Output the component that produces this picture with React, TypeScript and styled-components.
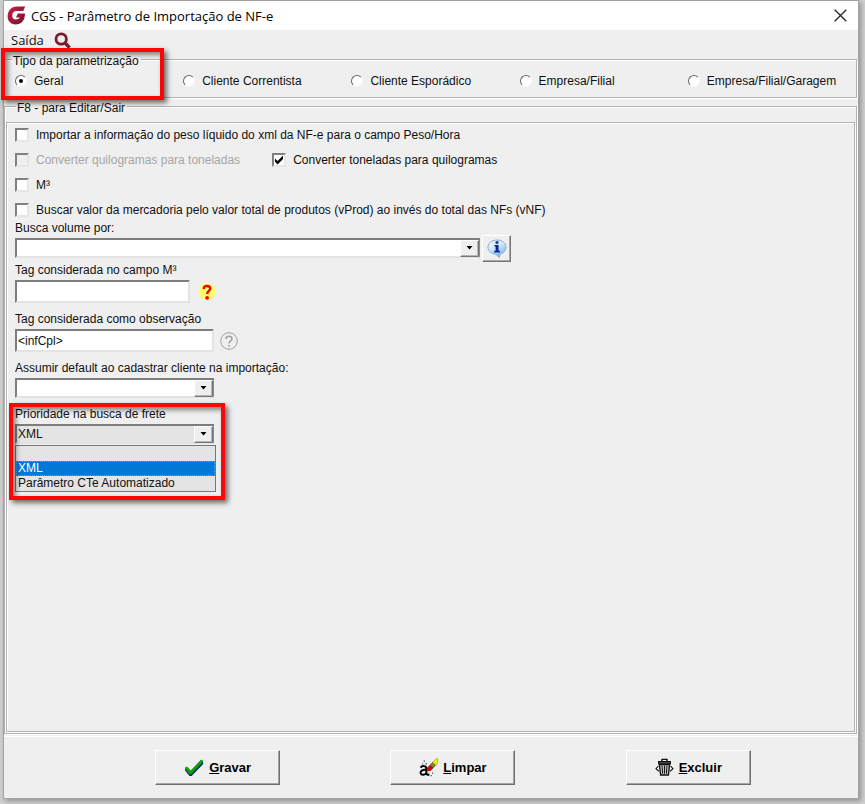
import React, { useState } from "react";
import styled, { createGlobalStyle, css } from "styled-components";

const GlobalStyle = createGlobalStyle`
  * { box-sizing: border-box; }
  body {
    margin: 0;
    background: #cfcfcf;
    color: #111;
    font: 12px/14px "Liberation Sans", Arial, sans-serif;
  }
  button, input, select { font: inherit; color: inherit; }
`;

const Desktop = styled.div`
  min-height: 100vh;
  display: flex;
  padding: 0 6px 5px 3px;
`;

const Window = styled.main`
  flex: 1;
  min-width: 0;
  display: flex;
  flex-direction: column;
  background: #efefef;
  border: 1px solid #a3a3a3;
  box-shadow: 2px 2px 5px rgba(0, 0, 0, 0.3);
`;

const TitleBar = styled.header`
  display: flex;
  align-items: center;
  gap: 5px;
  height: 29px;
  padding: 0 11px 0 3px;
  background: #fff;
`;

const Title = styled.h1`
  flex: 1;
  margin: 0;
  font: 400 13px/20px "Open Sans", "Segoe UI", sans-serif;
  color: #000;
`;

const IconButton = styled.button`
  display: flex;
  padding: 0;
  border: 0;
  background: none;
`;

const MenuBar = styled.nav`
  display: flex;
  align-items: center;
  gap: 10px;
  height: 20px;
  padding: 0 7px;
`;

const MenuItem = styled.button`
  padding: 0;
  border: 0;
  background: none;
  font: 400 13px/18px "Open Sans", "Segoe UI", sans-serif;
`;

const etched = css`
  border: 1px solid #b2b2b2;
  box-shadow: 1px 1px 0 #fff, inset 1px 1px 0 #fff;
`;

const Group = styled.fieldset<{ $fill?: boolean }>`
  position: relative;
  margin: 1px 1px 0 0;
  padding: 0;
  min-width: 0;
  ${etched}
  ${(p) => p.$fill && css`
    flex: 1;
    display: flex;
    flex-direction: column;
    margin-top: 0;
    padding: 7px 1px 1px;
  `}
`;

const Legend = styled.legend<{ $indent: number }>`
  margin-left: ${(p) => p.$indent}px;
  padding: 3px 2px 0 1px;
  background: #efefef;
`;

const RadioRow = styled.div`
  display: grid;
  grid-template-columns: repeat(5, 1fr);
  padding: 6px 0 9px 10px;
`;

const Choice = styled.label<{ $disabled?: boolean }>`
  display: flex;
  align-items: center;
  gap: 7px;
  white-space: nowrap;
  color: ${(p) => (p.$disabled ? "#a6a6a6" : "inherit")};
`;

const Radio = styled.input`
  appearance: none;
  display: grid;
  place-items: center;
  width: 12px;
  height: 12px;
  margin: 0;
  border: 1px solid;
  border-color: #666 #f8f8f8 #f8f8f8 #666;
  border-radius: 50%;
  background: #fff;
  &:checked::before {
    content: "";
    width: 4px;
    height: 4px;
    border-radius: 50%;
    background: #000;
  }
`;

const Box = styled.span`
  display: grid;
  width: 14px;
  height: 14px;
  > * { grid-area: 1 / 1; }
  > svg { display: none; pointer-events: none; }
  > input:checked + svg { display: block; }
`;

const Check = styled.input`
  appearance: none;
  width: 14px;
  height: 14px;
  margin: 0;
  border: 2px solid;
  border-color: #808080 #e6e6e6 #e6e6e6 #808080;
  background: #fff;
  &:disabled { background: #efefef; }
`;

const Panel = styled.div`
  flex: 1;
  padding: 0 8px 24px;
  ${etched}
`;

const Checks = styled.div`
  display: flex;
  flex-direction: column;
  gap: 3px;
  padding-top: 1px;
`;

const CheckRow = styled.div`
  display: flex;
  align-items: center;
  gap: 32px;
  height: 22px;
`;

const Field = styled.div<{ $gap?: number }>`
  display: flex;
  flex-direction: column;
  align-items: flex-start;
  gap: 3px;
  margin-bottom: ${(p) => p.$gap ?? 9}px;
`;

const Control = styled.div<{ $height: number; $gap?: number }>`
  display: flex;
  align-items: center;
  gap: ${(p) => p.$gap ?? 2}px;
  height: ${(p) => p.$height}px;
`;

const sunken = css`
  border: 2px solid;
  border-color: #7d7d7d #e3e3e3 #e3e3e3 #7d7d7d;
  border-radius: 0;
  background: #fff;
  outline: 0;
`;

const TextBox = styled.input<{ $width: number }>`
  ${sunken}
  width: ${(p) => p.$width}px;
  height: 23px;
  padding: 0 1px;
`;

const Combo = styled.div<{ $width: number }>`
  position: relative;
  display: grid;
  width: ${(p) => p.$width}px;
  height: 20px;
`;

const Select = styled.select<{ $shaded?: boolean }>`
  ${sunken}
  border-color: #7d7d7d #8a8a8a #e3e3e3 #7d7d7d;
  border-right-width: 1px;
  appearance: none;
  grid-area: 1 / 1;
  width: 100%;
  height: 20px;
  padding: 0 20px 0 1px;
  ${(p) => p.$shaded && css`background: #e4e4e4;`}
`;

const raised = css`
  border: 1px solid;
  border-color: #fff #777 #777 #fff;
  background: #efefef;
`;

const DropArrow = styled.span`
  ${raised}
  grid-area: 1 / 1;
  justify-self: end;
  align-self: center;
  display: grid;
  place-items: center;
  width: 19px;
  height: 17px;
  margin-right: 1px;
  box-shadow: inset -1px -1px 0 #b5b5b5;
  pointer-events: none;
`;

const OptionList = styled.ul`
  position: absolute;
  top: 21px;
  left: 0;
  right: -2px;
  margin: 0;
  padding: 0;
  list-style: none;
  border: 1px solid #777;
  background: #e4e4e4;
`;

const Option = styled.li<{ $active?: boolean }>`
  height: 15px;
  padding: 0 2px;
  line-height: 15px;
  border: 0;
  ${(p) => p.$active && css`
    padding: 0 1px;
    border: 1px dotted #d9822b;
    line-height: 13px;
    background: #0078d7;
    color: #fff;
  `}
`;

const InfoButton = styled.button`
  ${raised}
  display: grid;
  place-items: center;
  flex: none;
  width: 29px;
  height: 27px;
  padding: 0;
  box-shadow: inset -1px -1px 0 #a8a8a8;
`;

const Footer = styled.footer`
  display: grid;
  grid-template-columns: repeat(3, 1fr);
  justify-items: center;
  margin-top: 2px;
  padding: 13px 52px 13px 96px;
  border-top: 1px solid #fff;
`;

const ActionButton = styled.button`
  display: flex;
  align-items: center;
  justify-content: center;
  gap: 5px;
  width: 125px;
  height: 35px;
  padding: 0;
  border: 1px solid;
  border-color: #fff #6f6f6f #6f6f6f #fff;
  background: #efefef;
  box-shadow: inset -1px -1px 0 #a5a5a5;
  font-weight: 700;
  font-size: 13px;
  color: #000;
`;

const Highlight = styled.div<{ $x: number; $y: number; $w: number; $h: number }>`
  position: absolute;
  left: ${(p) => p.$x}px;
  top: ${(p) => p.$y}px;
  width: ${(p) => p.$w}px;
  height: ${(p) => p.$h}px;
  border: 4px solid #f80808;
  box-shadow: 3px 3px 5px rgba(0, 0, 0, 0.55), inset 3px 3px 5px rgba(0, 0, 0, 0.45);
  pointer-events: none;
  z-index: 2;
`;

const FreightField = styled(Field)`
  position: relative;
  width: 199px;
`;

const LogoIcon = () => (
  <svg width="19" height="19" viewBox="0 0 19 19" aria-hidden="true">
    <defs>
      <linearGradient id="logo" x1="0" y1="0" x2="1" y2="1">
        <stop offset="0" stopColor="#d3203c" />
        <stop offset="1" stopColor="#6d1238" />
      </linearGradient>
    </defs>
    <path
      fill="url(#logo)"
      d="M18.2 0.6 L16.2 5 H9.6 C7 5 5.4 6.8 5.2 9.4 C5.1 11.8 6.6 13.4 8.8 13.4 C10.8 13.4 12.2 12.7 12.8 11.4 H9 L10.8 7.4 H18 L17.6 11 C16.8 15.6 13.4 18.4 8.6 18.4 C3.6 18.4 0.4 15 0.6 10 C0.9 4.6 4.4 0.6 9.8 0.6 Z"
    />
  </svg>
);

const SearchIcon = () => (
  <svg width="17" height="17" viewBox="0 0 17 17" fill="none" stroke="#7c1a30" aria-hidden="true">
    <circle cx="7.2" cy="7" r="5.2" strokeWidth="2.8" />
    <path d="M11 11 L15.6 15.6" strokeWidth="3.4" />
  </svg>
);

const CloseIcon = () => (
  <svg width="13" height="13" viewBox="0 0 13 13" stroke="#222" strokeWidth="1.3" aria-hidden="true">
    <path d="M0.7 0.7 L12.3 12.3 M12.3 0.7 L0.7 12.3" />
  </svg>
);

const TickIcon = () => (
  <svg width="14" height="14" viewBox="0 0 14 14" aria-hidden="true">
    <path d="M3 5.4 L5.6 8 L11 2.6 V6 L5.6 11.4 L3 8.8 Z" fill="#000" />
  </svg>
);

const ArrowIcon = () => (
  <svg width="7" height="4" viewBox="0 0 7 4" aria-hidden="true">
    <path d="M0.5 0 H6.5 L3.5 3.5 Z" fill="#000" />
  </svg>
);

const InfoIcon = () => (
  <svg width="20" height="19" viewBox="0 0 20 19" aria-hidden="true">
    <defs>
      <linearGradient id="bubble" x1="0" y1="0" x2="0.6" y2="1">
        <stop offset="0" stopColor="#f4faff" />
        <stop offset="0.5" stopColor="#d3e8fb" />
        <stop offset="1" stopColor="#7fb6ea" />
      </linearGradient>
    </defs>
    <path
      d="M10 1 C15 1 19 4 19 8.2 C19 11.8 16.2 14.4 13 15 L12.4 18.4 L8.6 15.2 C4.2 14.8 1 12.2 1 8.2 C1 4 5 1 10 1 Z"
      fill="url(#bubble)"
      stroke="#7ba6cf"
      strokeWidth="0.9"
    />
    <path d="M8.6 2.2 H11.4 V4.8 H8.6 Z M7.4 6 H11.6 V11.8 H13 V13.4 H7.2 V11.8 H8.6 V7.6 H7.4 Z" fill="#0a2a9c" />
  </svg>
);

const HintIcon = () => (
  <svg width="18" height="19" viewBox="0 0 18 19" aria-hidden="true">
    <circle cx="9" cy="9.5" r="8.6" fill="#ffff6b" />
    <path d="M5.8 7 V6 C5.8 3.2 12.2 3.2 12.2 6.4 C12.2 8.8 9.2 9 9.2 12" fill="none" stroke="#f00000" strokeWidth="2.4" />
    <circle cx="9.1" cy="15.8" r="1.9" fill="#f00000" />
  </svg>
);

const HelpIcon = () => (
  <svg width="18" height="18" viewBox="0 0 18 18" fill="none" stroke="#a0a0a0" aria-hidden="true">
    <circle cx="9" cy="9" r="8.3" strokeWidth="1" />
    <path d="M6 7 C6 3.4 12 3.4 12 7 C12 9 9 9 9 11.6" strokeWidth="1.5" />
    <circle cx="9" cy="13.8" r="0.6" strokeWidth="1" />
  </svg>
);

const SaveIcon = () => (
  <svg width="20" height="18" viewBox="0 0 20 18" aria-hidden="true">
    <path d="M1 9.4 L3 8.4 L6.6 12 L17 1 L19 2.4 L19.2 5 L7.6 17 H5.6 L1 11.6 Z" fill="#12206e" />
    <path d="M1 8.4 L3 7.6 L6.8 11.4 L17.4 0.6 L19 1.8 L18.6 3.4 L7 15.6 L5.6 15.2 L1 10 Z" fill="#0aa00a" />
  </svg>
);

const ClearIcon = () => (
  <svg width="19" height="19" viewBox="0 0 19 19" aria-hidden="true">
    <path d="M1.6 9.6 C3 7.4 7.4 7.6 7.4 10.4 V15 C7.4 16.8 8.6 17 10.4 16.6 M7.4 12 C4.2 11.4 1.2 12.6 1.6 15 C2.2 17.8 6.2 17.2 7.4 14.6" fill="none" stroke="#000" strokeWidth="2" />
    <path d="M4.6 2.4 H6 V3.8 H4.6 Z M6.6 5 H8 V6.4 H6.6 Z M3 5.4 H4.2 V6.6 H3 Z M13 14.6 H14.2 V15.8 H13 Z M11.6 17 H12.8 V18.2 H11.6 Z" fill="#555" />
    <path d="M8 10.4 L11 7.2 L14 10 L11.2 12.8 H9 Z" fill="#e80000" stroke="#400" strokeWidth="0.6" />
    <path d="M11 7.2 L13.8 4.2 L16.6 7.2 L14 10 Z" fill="#85851a" stroke="#333" strokeWidth="0.6" />
    <path d="M13.8 4.2 L17 0.8 H18.6 V5 L16.6 7.2 Z" fill="#f8f000" stroke="#666600" strokeWidth="0.4" />
  </svg>
);

const TrashIcon = () => (
  <svg width="19" height="19" viewBox="0 0 19 19" fill="none" stroke="#111" aria-hidden="true">
    <path d="M7 3 V1.4 H12 V3" strokeWidth="1.4" />
    <path d="M3.6 3.6 H15.4 V5.8 H3.6 Z" fill="#555" strokeWidth="1.1" />
    <path d="M4.4 6.6 L5.6 17 H13.4 L14.6 6.6 Z" fill="#c4c4c4" strokeWidth="1.3" />
    <path d="M7 7.6 L7.6 15.6 M9.5 7.6 V15.6 M12 7.6 L11.4 15.6" strokeWidth="1" />
    <path d="M3.4 8 L1 10.6 L4 13.4 M15.6 8 L18 10.6 L15 13.4" strokeWidth="1.1" />
  </svg>
);

const targets = ["Geral", "Cliente Correntista", "Cliente Esporádico", "Empresa/Filial", "Empresa/Filial/Garagem"];
const priorities = ["", "XML", "Parâmetro CTe Automatizado"];

function CheckChoice({ label, checked, disabled }: { label: string; checked?: boolean; disabled?: boolean }) {
  return (
    <Choice $disabled={disabled}>
      <Box>
        <Check type="checkbox" defaultChecked={checked} disabled={disabled} />
        <TickIcon />
      </Box>
      {label}
    </Choice>
  );
}

export default function App() {
  const [target, setTarget] = useState("Geral");
  const [priority, setPriority] = useState("XML");

  return (
    <>
      <GlobalStyle />
      <Desktop>
        <Window>
          <TitleBar>
            <LogoIcon />
            <Title>CGS - Parâmetro de Importação de NF-e</Title>
            <IconButton type="button" aria-label="Fechar"><CloseIcon /></IconButton>
          </TitleBar>
          <MenuBar>
            <MenuItem type="button">Saída</MenuItem>
            <IconButton type="button" aria-label="Pesquisar"><SearchIcon /></IconButton>
          </MenuBar>

          <Group>
            <Legend $indent={7}>Tipo da parametrização</Legend>
            <RadioRow>
              {targets.map((name) => (
                <Choice key={name}>
                  <Radio type="radio" name="target" checked={target === name} onChange={() => setTarget(name)} />
                  {name}
                </Choice>
              ))}
            </RadioRow>
            <Highlight $x={-4} $y={-20} $w={163} $h={52} />
          </Group>

          <Group $fill>
            <Legend $indent={10}>F8 - para Editar/Sair</Legend>
            <Panel>
              <Checks>
                <CheckRow>
                  <CheckChoice label="Importar a informação do peso líquido do xml da NF-e para o campo Peso/Hora" />
                </CheckRow>
                <CheckRow>
                  <CheckChoice label="Converter quilogramas para toneladas" disabled />
                  <CheckChoice label="Converter toneladas para quilogramas" checked />
                </CheckRow>
                <CheckRow><CheckChoice label="M³" /></CheckRow>
                <CheckRow>
                  <CheckChoice label="Buscar valor da mercadoria pelo valor total de produtos (vProd) ao invés do total das NFs (vNF)" />
                </CheckRow>
              </Checks>

              <Field $gap={5}>
                <label htmlFor="volume">Busca volume por:</label>
                <Control $height={20}>
                  <Combo $width={465}>
                    <Select id="volume"><option></option></Select>
                    <DropArrow><ArrowIcon /></DropArrow>
                  </Combo>
                  <InfoButton type="button" aria-label="Informações"><InfoIcon /></InfoButton>
                </Control>
              </Field>

              <Field>
                <label htmlFor="tagM3">Tag considerada no campo M³</label>
                <Control $height={23} $gap={8}>
                  <TextBox id="tagM3" $width={175} />
                  <HintIcon />
                </Control>
              </Field>

              <Field>
                <label htmlFor="tagObs">Tag considerada como observação</label>
                <Control $height={23} $gap={6}>
                  <TextBox id="tagObs" $width={199} defaultValue="<infCpl>" />
                  <HelpIcon />
                </Control>
              </Field>

              <Field>
                <label htmlFor="defaults">Assumir default ao cadastrar cliente na importação:</label>
                <Combo $width={199}>
                  <Select id="defaults"><option></option></Select>
                  <DropArrow><ArrowIcon /></DropArrow>
                </Combo>
              </Field>

              <FreightField>
                <label htmlFor="priority">Prioridade na busca de frete</label>
                <Combo $width={199}>
                  <Select id="priority" $shaded value={priority} onChange={(e) => setPriority(e.target.value)}>
                    {priorities.map((name) => <option key={name}>{name}</option>)}
                  </Select>
                  <DropArrow><ArrowIcon /></DropArrow>
                  <OptionList role="listbox" aria-label="Prioridade na busca de frete">
                    {priorities.map((name) => (
                      <Option
                        key={name}
                        role="option"
                        aria-selected={name === priority}
                        $active={name === priority}
                        onClick={() => setPriority(name)}
                      >
                        {name}
                      </Option>
                    ))}
                  </OptionList>
                </Combo>
                <Highlight $x={-6} $y={-4} $w={216} $h={97} />
              </FreightField>
            </Panel>
          </Group>

          <Footer>
            <ActionButton type="button"><SaveIcon /><span><u>G</u>ravar</span></ActionButton>
            <ActionButton type="button"><ClearIcon /><span><u>L</u>impar</span></ActionButton>
            <ActionButton type="button"><TrashIcon /><span><u>E</u>xcluir</span></ActionButton>
          </Footer>
        </Window>
      </Desktop>
    </>
  );
}
